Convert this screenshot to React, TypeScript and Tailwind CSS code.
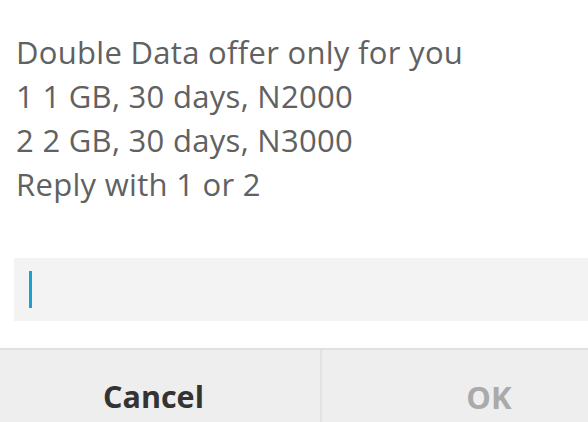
import React from "react";

export default function App() {
  const lines = [
    "Double Data offer only for you",
    "1 1 GB, 30 days, N2000",
    "2 2 GB, 30 days, N3000",
    "Reply with 1 or 2",
  ];
  return (
    <div
      className="w-[588px] h-[422px] overflow-hidden bg-white flex flex-col"
      style={{ fontFamily: "'Open Sans', Lato, sans-serif" }}
    >
      <div className="pt-[30px] pl-[16px] text-[31px] leading-[44px] tracking-[0.3px] text-[#616161]">
        {lines.map((l) => (
          <div key={l} className="whitespace-nowrap">
            {l}
          </div>
        ))}
      </div>
      <div className="mt-[52px] ml-[14px] w-[600px] h-[63px] shrink-0 bg-[#f3f3f3] flex items-center pl-[15px]">
        <div className="w-[3px] h-[37px] bg-[#1e9fd2]" />
      </div>
      <div className="mt-[27px] flex-1 border-t-2 border-[#e0e0e0] bg-[#eeeeee] flex">
        <div className="w-[320px] shrink-0 flex items-center justify-center pr-[13px] pt-[22px] text-[30.5px] font-bold text-[#333333]">
          Cancel
        </div>
        <div className="w-[2px] shrink-0 bg-[#e2e2e2]" />
        <div className="w-[334px] shrink-0 flex items-center justify-center pt-[22px] text-[31px] font-bold text-[#aaaaaa]">
          OK
        </div>
      </div>
    </div>
  );
}
